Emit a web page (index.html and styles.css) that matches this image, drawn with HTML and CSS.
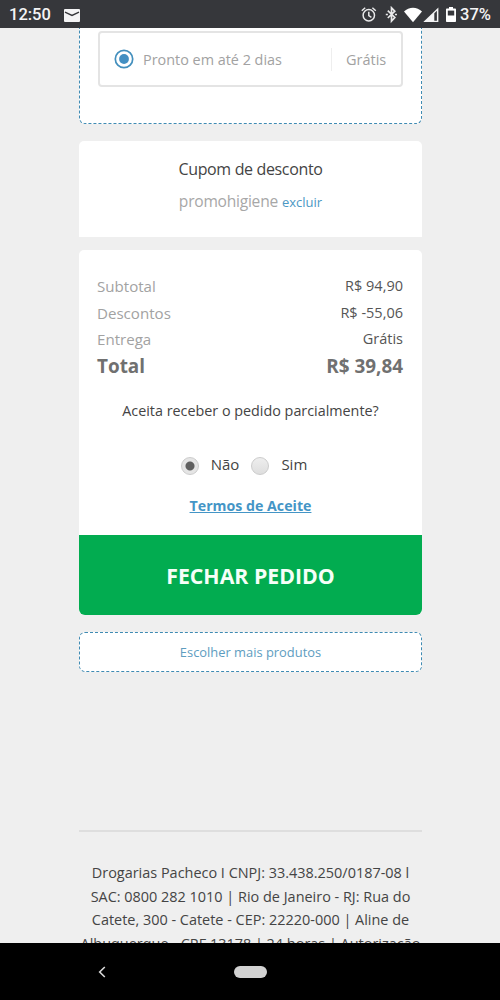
FILE: index.html
```html
<!DOCTYPE html>
<html lang="pt-BR">
<head>
<meta charset="utf-8">
<title>Carrinho</title>
<link rel="stylesheet" href="styles.css">
</head>
<body>
<header class="status">
  <span class="clock">12:50</span>
  <svg class="mail" width="16" height="13" viewBox="0 0 16 13"><rect width="16" height="13" rx="1" fill="#f4f4f5"/><path d="M1 3.200 8 6.500 15 3.200" fill="none" stroke="#36373b" stroke-width="1.400"/></svg>
  <svg class="indicators" width="98" height="18" viewBox="0 0 98 18">
    <g fill="none" stroke="#e9e9ea" stroke-width="1.500">
      <circle cx="7.800" cy="9.300" r="5.700"/>
      <path d="M.8 4.700 4.200 1.800M14.800 4.700 11.400 1.800M7.800 5.800V9.700L10.400 11.300"/>
      <path d="M26.800 4.700 33.800 11.500 30.500 15V1.800L33.800 5.200 26.800 12" stroke-width="1.700"/>
      <path d="M24.800 8.500H26.900M33.900 8.500H36" stroke-width="1.700"/>
    </g>
    <path d="M43 5.600C47.800.5 56.200.5 61 5.600L52 16.200Z" fill="#fff"/>
    <path d="M62.300 16 77.400 1.500V16Z" fill="#f4f4f5"/>
    <path d="M73.300 7.300V14.800H75.900V4.800Z" fill="#36373b"/>
    <path d="M88 1h4v1.600h2.200q.8 0 .8.800v11.800q0 .8-.8.800h-8.400q-.8 0-.8-.8V3.400q0-.8.800-.8H88Z" fill="#fff"/>
    <path d="M86.800 4.600h6.400V9.500h-6.400Z" fill="#36373b"/>
  </svg>
  <span class="percent">37%</span>
</header>
<main class="page">
  <section class="pickup">
    <div class="option">
      <svg class="choice" width="20" height="20" viewBox="0 0 20 20"><circle cx="10" cy="10" r="8.700" fill="#fff" stroke="#438fbd" stroke-width="1.700"/><circle cx="10" cy="10" r="4.900" fill="#438fc2"/></svg>
      <span class="when">Pronto em até 2 dias</span>
      <span class="price">Grátis</span>
    </div>
  </section>
  <section class="coupon">
    <h2 class="coupon-title">Cupom de desconto</h2>
    <p class="coupon-row"><span class="code">promohigiene</span><a class="remove">excluir</a></p>
  </section>
  <section class="summary">
    <div class="totals">
      <div class="line"><span>Subtotal</span><span class="value">R$ 94,90</span></div>
      <div class="line"><span>Descontos</span><span class="value">R$ -55,06</span></div>
      <div class="line"><span>Entrega</span><span class="value">Grátis</span></div>
      <div class="line total"><span>Total</span><span>R$ 39,84</span></div>
    </div>
    <p class="question">Aceita receber o pedido parcialmente?</p>
    <div class="radios">
      <span class="radio checked"></span><span class="radio-label first">Não</span>
      <span class="radio"></span><span class="radio-label">Sim</span>
    </div>
    <a class="terms">Termos de Aceite</a>
    <button class="checkout">FECHAR PEDIDO</button>
  </section>
  <a class="more">Escolher mais produtos</a>
  <footer class="legal">
    <div>Drogarias Pacheco I CNPJ: 33.438.250/0187-08 l</div>
    <div>SAC: 0800 282 1010 | Rio de Janeiro - RJ: Rua do</div>
    <div>Catete, 300 - Catete - CEP: 22220-000 | Aline de</div>
    <div>Albuquerque - CRF 13178 | 24 horas | Autorização</div>
  </footer>
</main>
<nav class="navbar">
  <svg class="back" width="8" height="12" viewBox="0 0 8 12"><path d="M6.800 1 1.700 6 6.800 11" fill="none" stroke="#d8d8d8" stroke-width="1.600"/></svg>
  <span class="home"></span>
</nav>
</body>
</html>
```
FILE: styles.css
```css
* { box-sizing: border-box; }
body {
  margin: 0;
  width: 500px;
  height: 1000px;
  display: flex;
  flex-direction: column;
  overflow: hidden;
  background: #efefef;
  font-family: "Open Sans", sans-serif;
  font-size: 14.5px;
  color: #444;
  white-space: nowrap;
}
h2, p { margin: 0; font-weight: 400; }
svg { display: block; flex: none; }

.status {
  height: 28px;
  flex: none;
  display: flex;
  align-items: center;
  padding: 2px 9px 0;
  background: #36373b;
  color: #f4f4f5;
  font: 500 16.5px/26px Roboto, sans-serif;
}
.clock { width: 55px; }
.indicators { margin-left: 281px; }
.percent { margin-left: 1px; font-size: 16.5px; }

.page {
  height: 915px;
  flex: none;
  width: 343px;
  margin-left: 79px;
  overflow: hidden;
}
.pickup {
  height: 96px;
  padding: 3px 19px 0;
  background: #fff;
  border: 1px dashed #3f8bb3;
  border-top: 0;
  border-radius: 0 0 6px 6px;
}
.option {
  height: 56px;
  width: 305px;
  margin-left: -1px;
  display: flex;
  align-items: center;
  border: 2px solid #e4e4e4;
  border-radius: 4px;
  padding: 0 14px;
  color: #a2a2a2;
}
.when { margin-left: 9px; width: 188px; font-size: 14.400px; }
.price { border-left: 1px solid #eee; padding-left: 14px; line-height: 23px; }

.coupon {
  height: 96px;
  margin-top: 17px;
  padding-top: 16px;
  background: #fff;
  border-radius: 5px 5px 0 0;
  text-align: center;
}
.coupon-title { font-size: 16px; line-height: 24px; letter-spacing: -0.350px; }
.coupon-row {
  display: flex;
  justify-content: center;
  align-items: baseline;
  gap: 4px;
  margin-top: 8px;
  line-height: 24px;
}
.code { font-size: 15.600px; letter-spacing: -0.250px; color: #a7a7a7; }
.remove { font-size: 13px; color: #4b98c4; }

.summary {
  height: 365px;
  margin-top: 13px;
  display: flex;
  flex-direction: column;
  align-items: center;
  background: #fff;
  border-radius: 5px;
}
.totals { width: 100%; padding: 23px 19px 0 18px; }
.line {
  display: flex;
  justify-content: space-between;
  font-size: 15.100px;
  line-height: 26.500px;
  color: #a2a2a2;
}
.value { color: #555; font-size: 14.500px; }
.total { font-size: 18.900px; font-weight: 700; color: #707070; }
.question { margin-top: 20px; font-size: 14.350px; line-height: 24px; }
.radios {
  display: flex;
  align-items: center;
  height: 24px;
  margin-top: 30px;
  padding-right: 13px;
  font-size: 15px;
}
.radio {
  width: 18px;
  height: 18px;
  margin-top: 2px;
  border: 1px solid #ccc;
  border-radius: 50%;
  background: linear-gradient(#eee, #dedede);
}
.checked { background: radial-gradient(circle, #606060 4px, #e5e5e5 5px); }
.radio-label { margin: -2px 0 0 12px; }
.first { margin-right: 12px; }
.terms {
  margin-top: 17px;
  font-size: 14.200px;
  line-height: 24px;
  font-weight: 700;
  color: #4495c6;
  text-decoration: underline;
}
.checkout {
  width: 100%;
  height: 80px;
  margin-top: auto;
  padding: 0 0 0;
  border: 0;
  border-radius: 0 0 6px 6px;
  background: #02ac50;
  color: #f5fff8;
  font: 700 21.300px "Open Sans", sans-serif;
}
.more {
  display: block;
  height: 40px;
  margin-top: 17px;
  border: 1px dashed #3f8bb3;
  border-radius: 6px;
  background: #fff;
  color: #5e9dbf;
  font-size: 12.900px;
  line-height: 39px;
  text-align: center;
}
.legal {
  margin-top: 158px;
  padding-top: 29px;
  border-top: 2px solid #dedede;
  display: flex;
  flex-direction: column;
  align-items: center;
  font-size: 14.450px;
  line-height: 23.700px;
}
.navbar {
  flex: 1;
  display: flex;
  align-items: center;
  padding: 1px 0 0 98px;
  background: #000;
}
.home {
  width: 33px;
  height: 12px;
  margin-left: 128px;
  border-radius: 6px;
  background: #d2d2d2;
}
```
